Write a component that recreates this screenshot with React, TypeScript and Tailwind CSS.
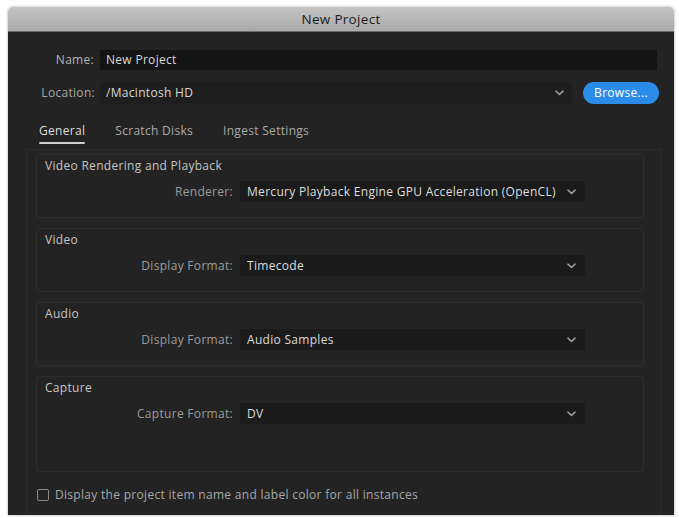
import React from "react";

const font = { fontFamily: '"Open Sans", "Liberation Sans", sans-serif' };

function Chevron() {
  return (
    <svg width="9" height="6" viewBox="0 0 9 6" className="shrink-0">
      <path d="M1 1.2 L4.5 4.5 L8 1.2" fill="none" stroke="#9a9a9a" strokeWidth="1.6" strokeLinecap="round" strokeLinejoin="round" />
    </svg>
  );
}

function Select({ value }: { value: string }) {
  return (
    <div className="w-[345px] h-[21px] bg-[#1b1b1b] flex items-center pl-[7px] pr-[9px] justify-between">
      <span className="text-[#dcdcdc]">{value}</span>
      <Chevron />
    </div>
  );
}

function Section({ title, label, value, h }: { title: string; label: string; value: string; h: string }) {
  return (
    <div className={`border border-[#2d2d2d] rounded-[2px] flex flex-col ${h}`}>
      <div className="pl-[8px] pt-[1px] h-[21px] flex items-center text-[#c4c4c4]">{title}</div>
      <div className="flex items-center mt-[5px]">
        <div className="w-[196px] text-right text-[#9c9c9c]">{label}</div>
        <div className="ml-[7px]">
          <Select value={value} />
        </div>
      </div>
    </div>
  );
}

export default function App() {
  return (
    <div className="w-[679px] h-[518px] bg-white pt-[7px] pl-[8px]" style={font}>
      <div className="w-[666px] h-[508px] rounded-t-[5px] overflow-hidden flex flex-col shadow-[0_0_3px_rgba(0,0,0,0.35)] text-[12px] tracking-[0.3px]">
        <div className="h-[25px] bg-gradient-to-b from-[#c4c4c4] to-[#a9a9a9] flex items-center justify-center text-[13.5px] tracking-[0.3px] text-[#1c1c1c] border-b border-[#6a6a6a]">
          New Project
        </div>
        <div className="flex-1 bg-[#232323] flex flex-col">
          <div className="flex items-center mt-[18px] h-[20px]">
            <div className="w-[86px] text-right text-[#b4b4b4]">Name:</div>
            <div className="ml-[6px] w-[557px] h-[20px] bg-[#141414] flex items-center pl-[6px] text-[#d8d8d8]">New Project</div>
          </div>
          <div className="flex items-center mt-[12px] h-[22px]">
            <div className="w-[87px] text-right text-[#a8a8a8]">Location:</div>
            <div className="ml-[5px] w-[472px] h-[22px] bg-[#1e1e1e] flex items-center justify-between pl-[6px] pr-[8px] text-[#d8d8d8]">
              <span>/Macintosh HD</span>
              <Chevron />
            </div>
            <div className="ml-[11px] w-[76px] h-[22px] rounded-full bg-[#2b8be8] text-white flex items-center justify-center">
              Browse...
            </div>
          </div>
          <div className="flex items-end h-[24px] mt-[16px] pl-[31px] gap-[30px] text-[#a9a9a9]">
            <div className="flex flex-col items-start">
              <span className="text-[#dedede]">General</span>
              <div className="h-[2px] w-[46px] bg-[#cfcfcf] mt-[2px] rounded-full" />
            </div>
            <span className="pb-[4px]">Scratch Disks</span>
            <span className="pb-[4px]">Ingest Settings</span>
          </div>
          <div className="ml-[18px] mt-[5px] w-[635px] flex-1 border border-[#2c2c2c] border-b-0 flex flex-col pl-[9px] pr-[16px] pt-[4px]">
            <div className="flex flex-col gap-[10px]">
              <Section h="h-[64px]" title="Video Rendering and Playback" label="Renderer:" value="Mercury Playback Engine GPU Acceleration (OpenCL)" />
              <Section h="h-[64px]" title="Video" label="Display Format:" value="Timecode" />
              <Section h="h-[64px]" title="Audio" label="Display Format:" value="Audio Samples" />
              <Section h="h-[96px]" title="Capture" label="Capture Format:" value="DV" />
            </div>
            <div className="flex items-center mt-[14px] ml-[1px]">
              <div className="w-[12px] h-[12px] border border-[#8a8a8a] rounded-[2px]" />
              <span className="ml-[6px] text-[#a8a8a8]">Display the project item name and label color for all instances</span>
            </div>
          </div>
        </div>
      </div>
    </div>
  );
}
